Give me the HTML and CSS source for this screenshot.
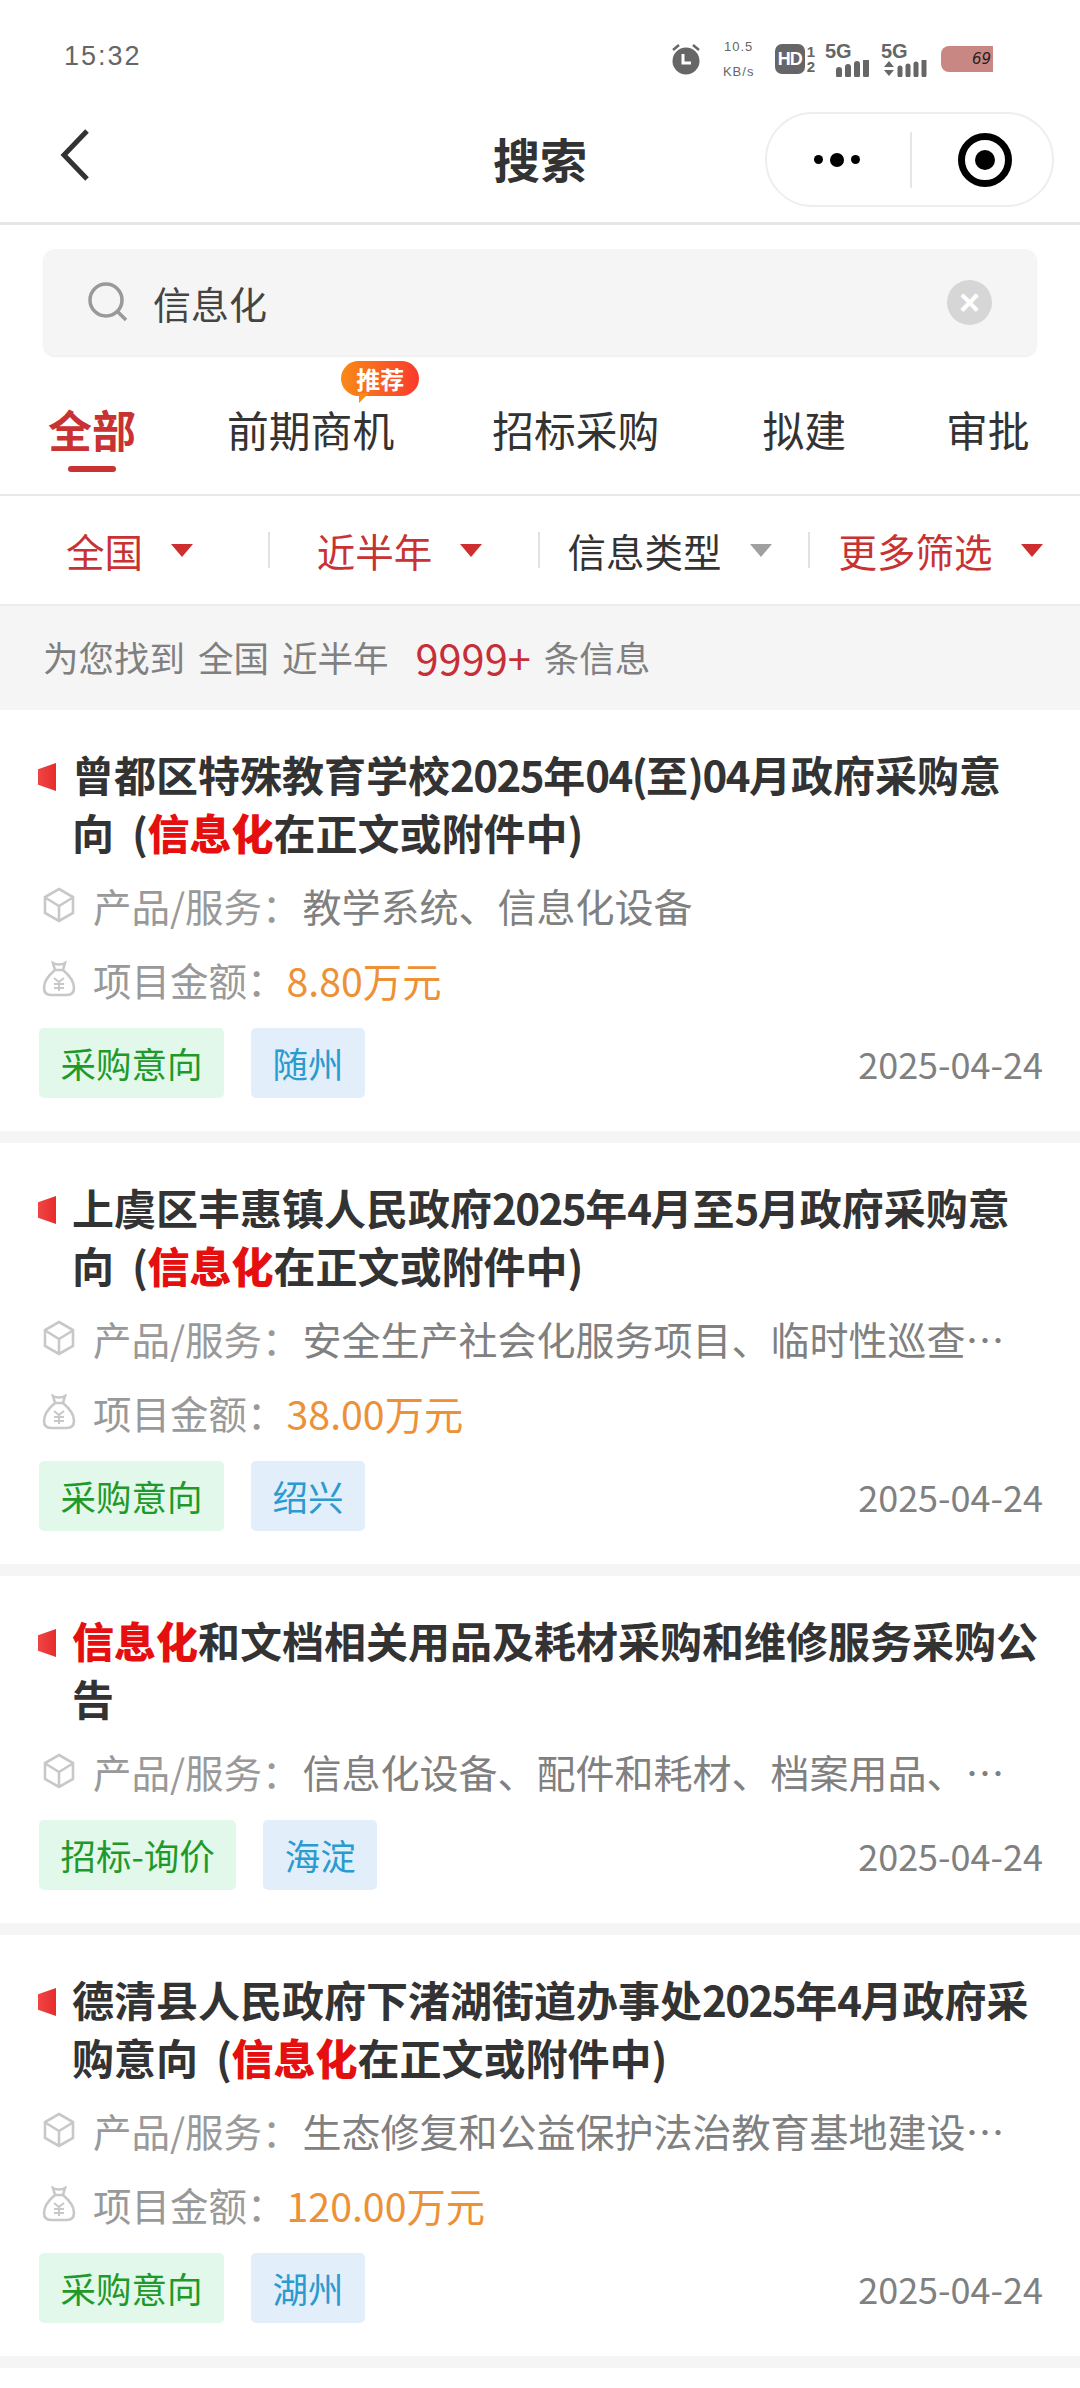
FILE: index.html
```html
<!DOCTYPE html>
<html lang="zh-CN">
<head>
  <meta charset="UTF-8">
  <title>搜索</title>
  <link rel="stylesheet" href="styles.css">
</head>
<body>
  <div class="statusbar">
    <span class="clock">15:32</span>
    <div class="status-icons">
      <svg class="ic-alarm" width="30" height="32" viewBox="0 0 30 32">
        <circle cx="15" cy="18" r="13.5" fill="#666"/>
        <path d="M12 11v9h8" fill="none" stroke="#fff" stroke-width="3"/>
        <path d="M2 7l6-5M28 7l-6-5" stroke="#666" stroke-width="2.5"/>
      </svg>
      <div class="speed"><span>10.5</span><span>KB/s</span></div>
      <div class="hd">HD</div>
      <div class="sim"><span>1</span><span>2</span></div>
      <div class="net">
        <span>5G</span>
        <svg width="36" height="17" viewBox="0 0 36 17"><path d="M4 10v5M13 7v8M22 4v11M31 1v14" stroke="#666" stroke-width="6" stroke-linecap="round"/></svg>
      </div>
      <div class="net net2">
        <span>5G</span>
        <svg width="44" height="17" viewBox="0 0 44 17"><path d="M1 7l5-6 5 6zM1 10l5 6 5-6z" fill="#666"/><path d="M17 8v7M25 6v9M33 4v11M41 1v14" stroke="#666" stroke-width="5" stroke-linecap="round"/></svg>
      </div>
      <div class="battery">69</div>
    </div>
  </div>

  <header class="navbar">
    <svg class="back" width="34" height="54" viewBox="0 0 34 54"><path d="M29 3L6 27l23 24" fill="none" stroke="#333" stroke-width="5"/></svg>
    <h1>搜索</h1>
    <div class="capsule">
      <div class="dots"><i></i><b></b><i></i></div>
      <div class="capsule-line"></div>
      <div class="target"><i></i></div>
    </div>
  </header>

  <div class="searchwrap">
    <div class="searchbox">
      <svg width="42" height="42" viewBox="0 0 42 42"><circle cx="19" cy="19" r="16" fill="none" stroke="#999" stroke-width="3.5"/><path d="M31 31l8 8" stroke="#999" stroke-width="3.5"/></svg>
      <span class="keyword">信息化</span>
      <div class="clear">×</div>
    </div>
  </div>

  <nav class="tabs">
    <a class="tab active">全部</a>
    <a class="tab has-badge">前期商机<span class="badge">推荐</span></a>
    <a class="tab">招标采购</a>
    <a class="tab">拟建</a>
    <a class="tab">审批</a>
  </nav>

  <div class="filters">
    <div class="filter red">全国<i></i></div>
    <div class="filter red">近半年<i></i></div>
    <div class="filter">信息类型<i></i></div>
    <div class="filter red">更多筛选<i></i></div>
  </div>

  <div class="summary">
    <span>为您找到</span><span>全国</span><span>近半年</span><em>9999+</em><span>条信息</span>
  </div>

  <div class="card">
    <div class="title"><i class="mark"></i><h2>曾都区特殊教育学校<span class="num">2025</span>年<span class="num">04(</span>至<span class="num">)04</span>月政府采购意向<span class="paren">&nbsp;&nbsp;(</span><b>信息化</b>在正文或附件中<span class="paren">)</span></h2></div>
    <div class="row">
      <svg class="ic" viewBox="0 0 34 36"><path d="M17 2l14 8v16l-14 8-14-8V10zM4 11l13 8 13-8M17 19v14" fill="none" stroke="#c8c8c8" stroke-width="2.6"/></svg>
      <span class="label">产品/服务：</span><span class="val">教学系统、信息化设备</span>
    </div>
    <div class="row">
      <svg class="ic" viewBox="0 0 34 36"><path d="M11 2c3 2 9 2 12 0l-2 7h-8zM13 9c-6 5-11 11-11 18 0 5 3 7 7 7h16c4 0 7-2 7-7 0-7-5-13-11-18" fill="none" stroke="#c8c8c8" stroke-width="2.6"/><path d="M12 17l5 4 5-4M17 21v9M12 23h10M12 27h10" fill="none" stroke="#c8c8c8" stroke-width="2"/></svg>
      <span class="label">项目金额：</span><span class="money">8.80万元</span>
    </div>
    <div class="foot">
      <span class="tag green">采购意向</span><span class="tag blue">随州</span>
      <span class="date">2025-04-24</span>
    </div>
  </div>

  <div class="card">
    <div class="title"><i class="mark"></i><h2>上虞区丰惠镇人民政府<span class="num">2025</span>年<span class="num">4</span>月至<span class="num">5</span>月政府采购意向<span class="paren">&nbsp;&nbsp;(</span><b>信息化</b>在正文或附件中<span class="paren">)</span></h2></div>
    <div class="row">
      <svg class="ic" viewBox="0 0 34 36"><path d="M17 2l14 8v16l-14 8-14-8V10zM4 11l13 8 13-8M17 19v14" fill="none" stroke="#c8c8c8" stroke-width="2.6"/></svg>
      <span class="label">产品/服务：</span><span class="val">安全生产社会化服务项目、临时性巡查…</span>
    </div>
    <div class="row">
      <svg class="ic" viewBox="0 0 34 36"><path d="M11 2c3 2 9 2 12 0l-2 7h-8zM13 9c-6 5-11 11-11 18 0 5 3 7 7 7h16c4 0 7-2 7-7 0-7-5-13-11-18" fill="none" stroke="#c8c8c8" stroke-width="2.6"/><path d="M12 17l5 4 5-4M17 21v9M12 23h10M12 27h10" fill="none" stroke="#c8c8c8" stroke-width="2"/></svg>
      <span class="label">项目金额：</span><span class="money">38.00万元</span>
    </div>
    <div class="foot">
      <span class="tag green">采购意向</span><span class="tag blue">绍兴</span>
      <span class="date">2025-04-24</span>
    </div>
  </div>

  <div class="card">
    <div class="title"><i class="mark"></i><h2><b>信息化</b>和文档相关用品及耗材采购和维修服务采购公告</h2></div>
    <div class="row">
      <svg class="ic" viewBox="0 0 34 36"><path d="M17 2l14 8v16l-14 8-14-8V10zM4 11l13 8 13-8M17 19v14" fill="none" stroke="#c8c8c8" stroke-width="2.6"/></svg>
      <span class="label">产品/服务：</span><span class="val">信息化设备、配件和耗材、档案用品、…</span>
    </div>
    <div class="foot">
      <span class="tag green">招标-询价</span><span class="tag blue">海淀</span>
      <span class="date">2025-04-24</span>
    </div>
  </div>

  <div class="card">
    <div class="title"><i class="mark"></i><h2>德清县人民政府下渚湖街道办事处<span class="num">2025</span>年<span class="num">4</span>月政府采购意向<span class="paren">&nbsp;&nbsp;(</span><b>信息化</b>在正文或附件中<span class="paren">)</span></h2></div>
    <div class="row">
      <svg class="ic" viewBox="0 0 34 36"><path d="M17 2l14 8v16l-14 8-14-8V10zM4 11l13 8 13-8M17 19v14" fill="none" stroke="#c8c8c8" stroke-width="2.6"/></svg>
      <span class="label">产品/服务：</span><span class="val">生态修复和公益保护法治教育基地建设…</span>
    </div>
    <div class="row">
      <svg class="ic" viewBox="0 0 34 36"><path d="M11 2c3 2 9 2 12 0l-2 7h-8zM13 9c-6 5-11 11-11 18 0 5 3 7 7 7h16c4 0 7-2 7-7 0-7-5-13-11-18" fill="none" stroke="#c8c8c8" stroke-width="2.6"/><path d="M12 17l5 4 5-4M17 21v9M12 23h10M12 27h10" fill="none" stroke="#c8c8c8" stroke-width="2"/></svg>
      <span class="label">项目金额：</span><span class="money">120.00万元</span>
    </div>
    <div class="foot">
      <span class="tag green">采购意向</span><span class="tag blue">湖州</span>
      <span class="date">2025-04-24</span>
    </div>
  </div>
</body>
</html>
```

FILE: styles.css
```css
* {
  box-sizing: border-box;
}
html, body {
  margin: 0;
  height: 2388px;
  overflow: hidden;
}
body {
  font-family: "Noto Sans CJK SC", "Noto Sans", sans-serif;
  background-color: #fff;
  color: #333;
}

/* status bar */
.statusbar {
  height: 90px;
  display: flex;
  align-items: center;
  justify-content: space-between;
  padding: 22px 87px 0 64px;
}
.clock {
  font-family: "Liberation Sans", sans-serif;
  font-size: 27px;
  letter-spacing: 2px;
  color: #666;
}
.status-icons {
  display: flex;
  align-items: center;
  color: #666;
  margin-top: 6px;
}
.ic-alarm {
  margin-right: 18px;
}
.speed {
  display: flex;
  flex-direction: column;
  align-items: center;
  width: 40px;
  font-family: "Liberation Sans", sans-serif;
  font-size: 13px;
  line-height: 25px;
  letter-spacing: 1px;
  margin-right: 16px;
}
.hd {
  width: 30px;
  height: 30px;
  border-radius: 7px;
  background: #666;
  color: #fff;
  font-family: "Liberation Sans", sans-serif;
  font-weight: 700;
  font-size: 18px;
  line-height: 30px;
  text-align: center;
  letter-spacing: -1px;
}
.sim {
  display: flex;
  flex-direction: column;
  font-family: "Liberation Sans", sans-serif;
  font-weight: 700;
  font-size: 15px;
  line-height: 15px;
  margin: 0 10px 0 2px;
}
.net {
  display: flex;
  flex-direction: column;
  align-items: flex-start;
  width: 46px;
  margin-right: 10px;
  font-family: "Liberation Sans", sans-serif;
  font-weight: 700;
  font-size: 20px;
  line-height: 18px;
}
.net svg {
  align-self: flex-end;
}
.net2 {
  margin-right: 14px;
}
.battery {
  width: 52px;
  height: 26px;
  border-radius: 8px 0 0 8px;
  background: #c98783;
  color: #222;
  font-family: "DejaVu Sans", sans-serif;
  font-style: italic;
  font-size: 15px;
  line-height: 26px;
  text-align: right;
  padding-right: 2px;
}

/* nav */
.navbar {
  height: 135px;
  display: flex;
  align-items: center;
  justify-content: space-between;
  padding: 0 26px 0 58px;
  border-bottom: 3px solid #e6e6e6;
  position: relative;
}
.back {
  margin-bottom: 2px;
}
.navbar h1 {
  position: absolute;
  left: 0;
  right: 0;
  top: 36px;
  margin: 0;
  text-align: center;
  font-size: 47px;
  line-height: 64px;
  font-weight: 700;
}
.capsule {
  width: 289px;
  height: 95px;
  margin-top: 7px;
  border: 2px solid #eee;
  border-radius: 48px;
  display: flex;
  align-items: center;
}
.dots {
  width: 139px;
  margin-right: 4px;
  display: flex;
  align-items: center;
  justify-content: center;
  gap: 7px;
}
.dots i {
  width: 9px;
  height: 9px;
  border-radius: 50%;
  background: #000;
}
.dots b {
  width: 14px;
  height: 14px;
  border-radius: 50%;
  background: #000;
}
.capsule-line {
  width: 2px;
  height: 56px;
  background: #e6e6e6;
}
.target {
  width: 54px;
  height: 54px;
  margin-left: 46px;
  border: 7px solid #000;
  border-radius: 50%;
  display: flex;
  align-items: center;
  justify-content: center;
}
.target i {
  width: 20px;
  height: 20px;
  border-radius: 50%;
  background: #000;
}

/* search */
.searchwrap {
  padding: 24px 43px 0;
}
.searchbox {
  height: 106px;
  background: #f5f5f5;
  border-radius: 12px;
  box-shadow: 0 2px 2px #f0f0f0;
  display: flex;
  align-items: center;
  padding: 0 45px 0 44px;
}
.keyword {
  margin-left: 24px;
  font-size: 38px;
  color: #444;
  flex: 1;
}
.clear {
  width: 45px;
  height: 45px;
  border-radius: 50%;
  background: #d6d6d6;
  color: #fff;
  font-family: "Liberation Sans", sans-serif;
  font-size: 36px;
  font-weight: 700;
  line-height: 45px;
  text-align: center;
}

/* tabs */
.tabs {
  height: 141px;
  display: flex;
  gap: 98px;
  align-items: flex-start;
  padding: 44px 0 0 48px;
  border-bottom: 2px solid #e8e8e8;
}
.tab {
  font-size: 41.8px;
  line-height: 60px;
  color: #333;
  position: relative;
}
.tab.active {
  font-size: 44px;
  font-weight: 700;
  color: #c83232;
  margin-right: -7px;
}
.tab:nth-child(4) {
  margin-left: 5px;
}
.tab:nth-child(5) {
  margin-left: 2px;
}
.tab.active::after {
  content: "";
  position: absolute;
  left: 20px;
  right: 20px;
  top: 67px;
  height: 6px;
  border-radius: 3px;
  background: #c83232;
}
.badge {
  position: absolute;
  right: -25px;
  top: -38px;
  width: 78px;
  height: 35px;
  border-radius: 18px;
  background: linear-gradient(90deg, #f88a17, #fa3a2c);
  color: #fff;
  font-size: 24px;
  font-weight: 700;
  line-height: 35px;
  text-align: center;
}
.badge::after {
  content: "";
  position: absolute;
  left: 18px;
  top: 32px;
  border-style: solid;
  border-width: 10px 10px 0 0;
  border-color: #f88a17 transparent transparent transparent;
}

/* filters */
.filters {
  height: 110px;
  display: flex;
  align-items: center;
  border-bottom: 2px solid #ececec;
}
.filter {
  width: 270px;
  height: 36px;
  padding-right: 9px;
  display: flex;
  align-items: center;
  justify-content: center;
  gap: 28px;
  font-size: 38.5px;
  color: #333;
  border-right: 2px solid #e2e2e2;
}
.filter:last-child {
  border-right: 0;
}
.filter i {
  width: 0;
  height: 0;
  border-style: solid;
  border-width: 13px 11px 0;
  border-color: #a0a0a0 transparent transparent;
}
.filter.red {
  color: #c83232;
}
.filter.red i {
  border-top-color: #cf2e2e;
}

/* summary */
.summary {
  height: 104px;
  background: #f5f5f5;
  display: flex;
  align-items: center;
  padding: 0 0 3px 43px;
  font-size: 35.5px;
  color: #808080;
  gap: 13px;
}
.summary em {
  font-style: normal;
  font-size: 41.5px;
  color: #c62f38;
  margin-left: 14px;
}

/* list */
.card {
  padding: 35px 37px 33px 39px;
  border-bottom: 12px solid #f5f5f5;
}
.title {
  display: flex;
  gap: 16px;
  margin-bottom: 7px;
}
.mark {
  flex: none;
  width: 18px;
  height: 28px;
  margin-top: 18px;
  margin-left: -1px;
  background: linear-gradient(90deg, #f04545, #e62c2c);
  clip-path: polygon(0 22%, 100% 0, 100% 100%, 0 78%);
}
.title h2 {
  margin: 0;
  font-size: 42px;
  line-height: 58px;
  font-weight: 700;
  color: #333;
}
.title h2 b {
  color: #e60f0f;
}
.title .num {
  letter-spacing: -1.5px;
}
.title .paren {
  letter-spacing: -0.5px;
}
.row {
  height: 74px;
  display: flex;
  align-items: center;
  font-size: 38.5px;
}
.ic {
  width: 34px;
  height: 36px;
  margin: 0 17px 0 3px;
  flex: none;
}
.label {
  color: #999;
}
.val {
  font-size: 39px;
  margin-left: 2px;
  color: #808080;
}
.money {
  font-size: 39.3px;
  margin-left: 1px;
  color: #ec9136;
}
.foot {
  display: flex;
  align-items: center;
  gap: 27px;
  margin-top: 12px;
}
.tag {
  height: 70px;
  padding: 0 21.5px;
  border-radius: 5px;
  font-size: 35.5px;
  line-height: 70px;
}
.tag.green {
  background: #e2f8ea;
  color: #1f9a2a;
}
.tag.blue {
  background: #e2eefa;
  color: #2a9bd0;
}
.date {
  margin-left: auto;
  font-size: 36px;
  color: #808080;
}
```
